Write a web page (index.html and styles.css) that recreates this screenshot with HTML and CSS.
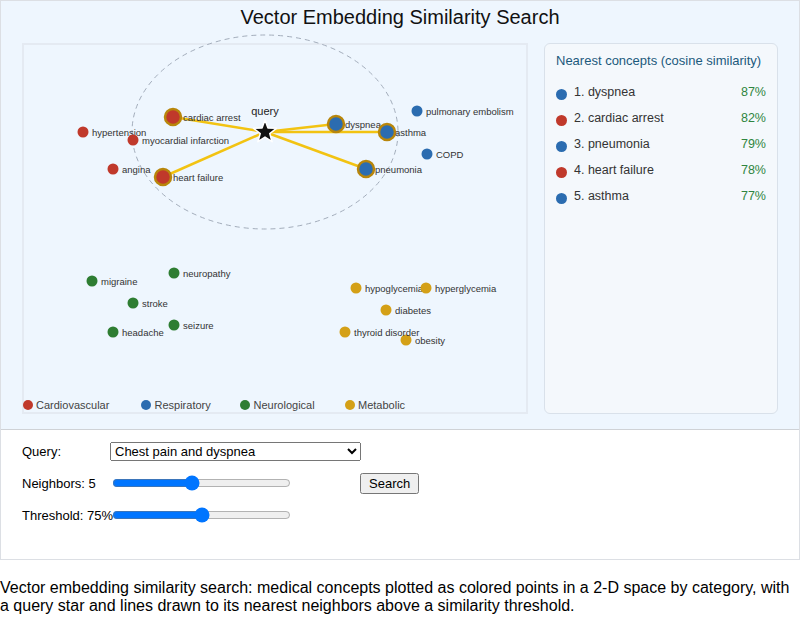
FILE: index.html
```html
<!DOCTYPE html>
<html lang="en">
<head>
    <meta charset="UTF-8">
    <meta name="viewport" content="width=device-width, initial-scale=1.0">
    <title>Vector Embedding Similarity Search</title>
    <link rel="stylesheet" href="styles.css">
</head>
<body>
    <div class="figure">
        <div class="viz">
            <h1 class="viz-title">Vector Embedding Similarity Search</h1>

            <div class="viz-body">
                <!-- 2-D embedding space -->
                <svg class="plot" width="506" height="371" viewBox="0 0 506 371">
                    <rect class="plot-frame" x="1" y="1" width="504" height="369"/>
                    <ellipse class="radius" cx="243" cy="89" rx="133" ry="97"/>

                    <line class="link" x1="243" y1="89" x2="151" y2="74"/>
                    <line class="link" x1="243" y1="89" x2="141" y2="134"/>
                    <line class="link" x1="243" y1="89" x2="314" y2="81"/>
                    <line class="link" x1="243" y1="89" x2="365" y2="89"/>
                    <line class="link" x1="243" y1="89" x2="344" y2="126"/>

                    <!-- Cardiovascular -->
                    <g class="node cardio"><circle cx="61" cy="89" r="5.5"/><text x="70" y="89">hypertension</text></g>
                    <g class="node cardio"><circle cx="111" cy="97" r="5.5"/><text x="120" y="97">myocardial infarction</text></g>
                    <g class="node cardio"><circle cx="91" cy="126" r="5.5"/><text x="100" y="126">angina</text></g>
                    <g class="node cardio hit"><circle cx="151" cy="74" r="8"/><text x="161" y="74">cardiac arrest</text></g>
                    <g class="node cardio hit"><circle cx="141" cy="134" r="8"/><text x="151" y="134">heart failure</text></g>

                    <!-- Respiratory -->
                    <g class="node resp hit"><circle cx="314" cy="81" r="8"/><text x="323" y="81">dyspnea</text></g>
                    <g class="node resp hit"><circle cx="365" cy="89" r="8"/><text x="373" y="89">asthma</text></g>
                    <g class="node resp hit"><circle cx="344" cy="126" r="8"/><text x="353" y="126">pneumonia</text></g>
                    <g class="node resp"><circle cx="395" cy="68" r="5.5"/><text x="404" y="68">pulmonary embolism</text></g>
                    <g class="node resp"><circle cx="405" cy="111" r="5.5"/><text x="414" y="111">COPD</text></g>

                    <!-- Neurological -->
                    <g class="node neuro"><circle cx="70" cy="238" r="5.5"/><text x="79" y="238">migraine</text></g>
                    <g class="node neuro"><circle cx="152" cy="230" r="5.5"/><text x="161" y="230">neuropathy</text></g>
                    <g class="node neuro"><circle cx="111" cy="260" r="5.5"/><text x="120" y="260">stroke</text></g>
                    <g class="node neuro"><circle cx="152" cy="282" r="5.5"/><text x="161" y="282">seizure</text></g>
                    <g class="node neuro"><circle cx="91" cy="289" r="5.5"/><text x="100" y="289">headache</text></g>

                    <!-- Metabolic -->
                    <g class="node meta"><circle cx="334" cy="245" r="5.5"/><text x="343" y="245">hypoglycemia</text></g>
                    <g class="node meta"><circle cx="404" cy="245" r="5.5"/><text x="413" y="245">hyperglycemia</text></g>
                    <g class="node meta"><circle cx="364" cy="267" r="5.5"/><text x="373" y="267">diabetes</text></g>
                    <g class="node meta"><circle cx="384" cy="297" r="5.5"/><text x="393" y="297">obesity</text></g>
                    <g class="node meta"><circle cx="323" cy="289" r="5.5"/><text x="332" y="289">thyroid disorder</text></g>

                    <!-- query point -->
                    <text class="query-label" x="243" y="68">query</text>
                    <polygon class="query-star" transform="translate(243 89)"
                        points="0,-12 2.94,-4.05 11.41,-3.71 4.76,1.55 7.05,9.71 0,5 -7.05,9.71 -4.76,1.55 -11.41,-3.71 -2.94,-4.05"/>

                    <!-- legend -->
                    <g class="legend">
                        <circle class="cardio" cx="6" cy="362" r="5"/><text x="14" y="362">Cardiovascular</text>
                        <circle class="resp" cx="124" cy="362" r="5"/><text x="132.5" y="362">Respiratory</text>
                        <circle class="neuro" cx="223" cy="362" r="5"/><text x="231.5" y="362">Neurological</text>
                        <circle class="meta" cx="328" cy="362" r="5"/><text x="336" y="362">Metabolic</text>
                    </g>
                </svg>

                <aside class="nearest">
                    <h2 class="nearest-title">Nearest concepts (cosine similarity)</h2>
                    <ol class="nearest-list">
                        <li><span class="dot resp"></span><span class="name">1. dyspnea</span><span class="sim">87%</span></li>
                        <li><span class="dot cardio"></span><span class="name">2. cardiac arrest</span><span class="sim">82%</span></li>
                        <li><span class="dot resp"></span><span class="name">3. pneumonia</span><span class="sim">79%</span></li>
                        <li><span class="dot cardio"></span><span class="name">4. heart failure</span><span class="sim">78%</span></li>
                        <li><span class="dot resp"></span><span class="name">5. asthma</span><span class="sim">77%</span></li>
                    </ol>
                </aside>
            </div>
        </div>

        <form class="controls">
            <div class="control-row">
                <label class="control-label" for="query">Query:</label>
                <select id="query" class="query-select">
                    <option>Chest pain and dyspnea</option>
                    <option>Headache and dizziness</option>
                    <option>High blood sugar</option>
                </select>
            </div>
            <div class="control-row">
                <label class="control-label" for="neighbors">Neighbors: 5</label>
                <input type="range" id="neighbors" class="slider" min="1" max="10" value="5">
                <button type="button" class="search-btn">Search</button>
            </div>
            <div class="control-row">
                <label class="control-label" for="threshold">Threshold: 75%</label>
                <input type="range" id="threshold" class="slider" min="50" max="100" value="75">
            </div>
        </form>
    </div>

    <p class="caption">Vector embedding similarity search: medical concepts plotted as colored points in a 2-D space by category, with a query star and lines drawn to its nearest neighbors above a similarity threshold.</p>
</body>
</html>
```

FILE: styles.css
```css
/* Reset */
* {
    box-sizing: border-box;
}

body {
    margin: 0;
    font-family: "Liberation Sans", Arial, sans-serif;
    color: #000;
    background: #fff;
}

/* Figure frame */
.figure {
    width: 800px;
    border: 1px solid #dcdfe4;
}

.viz {
    height: 429px;
    padding-top: 4px;
    background: #eef6fe;
    border-bottom: 1px solid #cfd2d6;
}

.viz-title {
    margin: 0 0 14px;
    font-size: 20px;
    line-height: 24px;
    font-weight: normal;
    text-align: center;
    color: #111;
}

.viz-body {
    display: flex;
    gap: 16px;
    padding: 0 21px;
}

/* Plot */
.plot {
    display: block;
    overflow: visible;
    font-family: "Liberation Sans", Arial, sans-serif;
}

.plot-frame {
    fill: none;
    stroke: #e4eaf2;
    stroke-width: 2;
}

.radius {
    fill: none;
    stroke: #a3adbb;
    stroke-width: 1;
    stroke-dasharray: 5 4;
}

.link {
    stroke: #f2c312;
    stroke-width: 2.5;
}

.node text {
    font-size: 9.5px;
    fill: #333;
    dominant-baseline: central;
}

.node.hit circle {
    stroke: #b8860b;
    stroke-width: 2.5;
}

.cardio { fill: #c0392b; }
.resp { fill: #2b6cb0; }
.neuro { fill: #2e7d32; }
.meta { fill: #d4a017; }

.query-label {
    font-size: 11px;
    fill: #222;
    text-anchor: middle;
    dominant-baseline: central;
}

.query-star {
    fill: #111;
    stroke: #fff;
    stroke-width: 1.5;
    stroke-linejoin: round;
}

.legend text {
    font-size: 11px;
    fill: #444;
    dominant-baseline: central;
}

/* Nearest concepts panel */
.nearest {
    width: 234px;
    height: 371px;
    padding: 9px 11px 0 11px;
    background: #f4f8fc;
    border: 1.5px solid #d9e1ea;
    border-radius: 6px;
}

.nearest-title {
    margin: 0 0 10px;
    font-size: 13px;
    line-height: 16px;
    font-weight: normal;
    color: #1c5a7c;
}

.nearest-list {
    list-style: none;
    margin: 0;
    padding: 0;
}

.nearest-list li {
    display: flex;
    align-items: center;
    height: 26px;
    font-size: 12.5px;
    color: #333;
}

.dot {
    width: 11px;
    height: 11px;
    margin-top: 4px;
    margin-right: 7px;
    border-radius: 50%;
}

.dot.cardio { background: #c0392b; }
.dot.resp { background: #2b6cb0; }

.name {
    flex: 1;
}

.sim {
    color: #2e8540;
}

/* Controls */
.controls {
    height: 129px;
    padding: 5px 21px 0;
    font-size: 13px;
}

.control-row {
    display: flex;
    align-items: center;
    height: 32px;
}

.control-label {
    display: inline-block;
    width: 88px;
    flex-shrink: 0;
    white-space: nowrap;
}

.query-select {
    width: 251px;
    font-family: "Liberation Sans", Arial, sans-serif;
    font-size: 13px;
}

.slider {
    width: 179px;
    margin: 0 2px;
}

.search-btn {
    margin-left: 67px;
    padding: 1px 7px;
    font-family: "Liberation Sans", Arial, sans-serif;
    font-size: 13px;
}

/* Caption */
.caption {
    margin: 19px 0 0;
    font-size: 16px;
    line-height: 18px;
    color: #000;
}
```
